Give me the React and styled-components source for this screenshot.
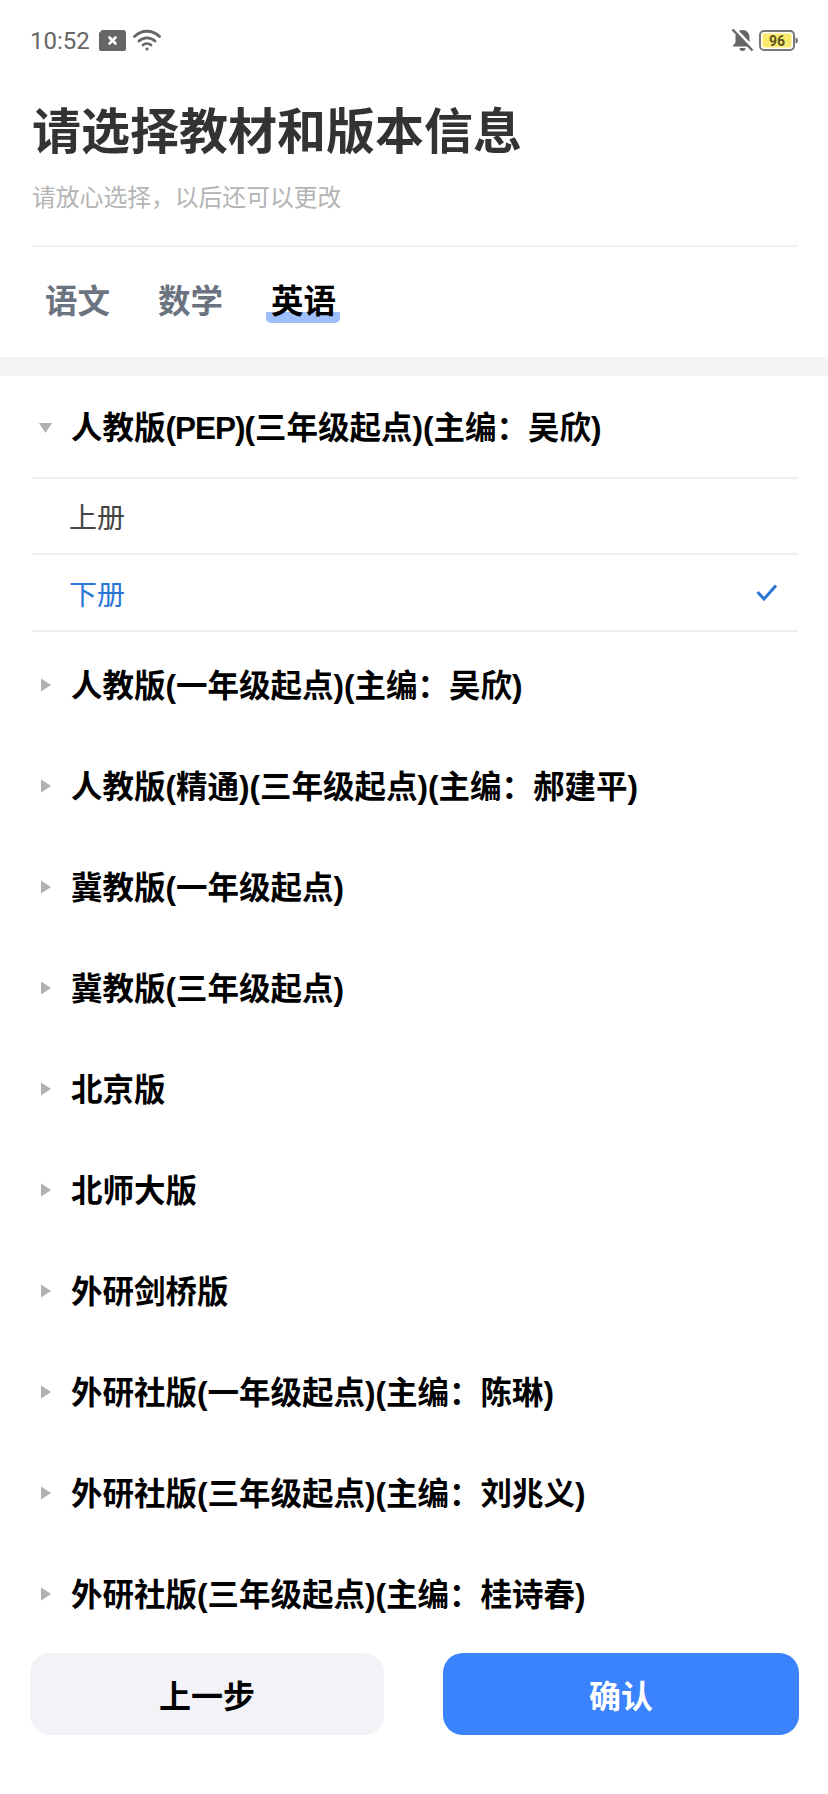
import React from 'react';
import styled, { createGlobalStyle } from 'styled-components';

const Global = createGlobalStyle`
  html, body { margin: 0; padding: 0; background: #fff; }
  * { box-sizing: border-box; }
`;
const Page = styled.div`
  width: 828px; height: 1794px; overflow: hidden; display: flex; flex-direction: column;
  background: #fff; font-family: "Liberation Sans", "Noto Sans CJK SC", sans-serif; color: #000;
`;
const StatusBar = styled.div`
  height: 80px; padding: 0 30px; display: flex; align-items: center; justify-content: space-between;
  color: #666;
`;
const StatusGroup = styled.div`
  display: flex; align-items: center; gap: ${p => p.$gap || 7}px;
`;
const Time = styled.span`
  font: 400 24px/1 Roboto, sans-serif; color: #666; margin-right: 2px; padding-top: 2px;
`;
const Head = styled.div`
  margin: 0 30px 0 32px; border-bottom: 2px solid #f0f0f0; padding-top: 22px; height: 167px;
`;
const Title = styled.h1`
  margin: 0; font-size: 49px; line-height: 60px; font-weight: 700; color: #333;
`;
const Subtitle = styled.p`
  margin: 19px 0 0; font-size: 23.8px; line-height: 34px; color: #b4b4b4;
`;
const Tabs = styled.div`
  height: 110px; padding: 31px 0 0 45px; display: flex; gap: 48px; align-items: flex-start;
`;
const Tab = styled.div`
  position: relative; font-size: 32.5px; line-height: 48px; font-weight: 700;
  color: ${p => p.$active ? '#000' : '#6b7280'};
  ${p => p.$active && `
    &::after {
      content: ''; position: absolute; left: -5px; right: -4px; top: 34px; height: 11px;
      border-radius: 0 0 5px 5px; background: #9dbffb; z-index: 0;
    }
  `}
`;
const TabLabel = styled.span`
  position: relative; z-index: 1;
`;
const Band = styled.div`
  height: 19px; background: #f3f3f3; flex: none;
`;
const List = styled.div`
  flex: 1; min-height: 0; overflow: hidden; padding: 0 30px 0 32px;
`;
const GroupHeader = styled.div`
  height: 101px; padding-bottom: 4px; display: flex; align-items: center; font-size: 31.5px; font-weight: 700; color: #000;
`;
const CaretBox = styled.span`
  width: 39px; flex: none; display: flex; justify-content: flex-start; padding-left: 7px; margin-top: 4px;
`;
const GroupName = styled.span`
  white-space: pre;
`;
const Code = styled.span`
  letter-spacing: -1px;
`;
const Volume = styled.div`
  height: ${p => p.$selected ? 79 : 76}px; padding: 0 20px 0 37px; display: flex; align-items: center; justify-content: space-between;
  border-top: 2px solid #efefef; font-size: 28px;
  color: ${p => p.$selected ? '#2a76d6' : '#444'};
  &:last-of-type { border-bottom: 2px solid #efefef; }
`;
const Volumes = styled.div`
  margin-bottom: 2px;
`;
const Footer = styled.div`
  height: 141px; flex: none; padding: 0 29px 0 30px; display: grid; grid-template-columns: 354px 356px; justify-content: space-between; align-items: start; background: #fff;
`;
const Button = styled.button`
  height: 82px; border: 0; border-radius: 20px; font-family: inherit; font-size: 32px; font-weight: 700;
  background: ${p => p.$primary ? '#3b82fd' : '#f3f3f7'};
  color: ${p => p.$primary ? '#fff' : '#000'};
`;

const Caret = ({ open }) => (
  <svg width="14" height="14" viewBox="0 0 14 14">
    <path d={open ? 'M0 3h13l-6.500 10z' : 'M2 0.500l10 6.500-10 6.500z'} fill="#b0b0b0" />
  </svg>
);
const NotifIcon = () => (
  <svg width="27" height="21" viewBox="0 0 27 21">
    <path d="M3 0h21a3 3 0 0 1 3 3v16a2 2 0 0 1-2 2H2a2 2 0 0 1-2-2V3z" fill="#666" />
    <path d="M10.500 7.500l6 6M16.500 7.500l-6 6" stroke="#fff" strokeWidth="2.600" strokeLinecap="round" />
  </svg>
);
const WifiIcon = () => (
  <svg width="28" height="22" viewBox="0 0 28 22" fill="none" stroke="#666" strokeWidth="2.800" strokeLinecap="round">
    <path d="M1.500 7.500C8.500 0.500 19.500 0.500 26.500 7.500" />
    <path d="M6 12C10.500 7.800 17.500 7.800 22 12" />
    <path d="M10 16C12.300 14.200 15.700 14.200 18 16" />
    <circle cx="14" cy="20" r="1.600" fill="#666" stroke="none" />
  </svg>
);
const BellOffIcon = () => (
  <svg width="23" height="23" viewBox="0 0 23 23">
    <path d="M11.500 1c4.500 0 7 3.200 7 7.500v5l3 4H1.500l3-4v-5C4.500 4.200 7 1 11.500 1z" fill="#666" />
    <path d="M8.500 19h6a3 3 0 0 1-6 0z" fill="#666" />
    <path d="M4 0l19 20" stroke="#fff" strokeWidth="3" />
    <path d="M1.500 0.500l20 21" stroke="#666" strokeWidth="2.400" />
  </svg>
);
const BatteryIcon = () => (
  <svg width="39" height="21" viewBox="0 0 39 21">
    <rect x="1" y="1" width="34" height="19" rx="4" fill="#fff" stroke="#777" strokeWidth="2" />
    <rect x="3.500" y="3.500" width="29" height="14" rx="2" fill="#fbe96e" />
    <path d="M36.500 7.500c1.500 0 2.500 1 2.500 3s-1 3-2.500 3z" fill="#777" />
    <text x="18" y="15.500" textAnchor="middle" fontFamily="Roboto, sans-serif" fontSize="14" fontWeight="700" fill="#5b5220">96</text>
  </svg>
);
const CheckIcon = () => (
  <svg width="22" height="17" viewBox="0 0 22 17" fill="none">
    <path d="M1.500 8L8 15 20 1.500" stroke="#2a76d6" strokeWidth="3" />
  </svg>
);

const C = '\uFF1A';
const others = [
  `人教版(一年级起点)(主编${C}吴欣)`,
  `人教版(精通)(三年级起点)(主编${C}郝建平)`,
  '冀教版(一年级起点)',
  '冀教版(三年级起点)',
  '北京版',
  '北师大版',
  '外研剑桥版',
  `外研社版(一年级起点)(主编${C}陈琳)`,
  `外研社版(三年级起点)(主编${C}刘兆义)`,
  `外研社版(三年级起点)(主编${C}桂诗春)`,
];

export default function App() {
  return (
    <Page lang="zh-CN">
      <Global />
      <StatusBar>
        <StatusGroup>
          <Time>10:52</Time>
          <NotifIcon />
          <WifiIcon />
        </StatusGroup>
        <StatusGroup $gap={5}>
          <BellOffIcon />
          <BatteryIcon />
        </StatusGroup>
      </StatusBar>
      <Head>
        <Title>请选择教材和版本信息</Title>
        <Subtitle>{'请放心选择\uFF0C以后还可以更改'}</Subtitle>
      </Head>
      <Tabs>
        <Tab><TabLabel>语文</TabLabel></Tab>
        <Tab><TabLabel>数学</TabLabel></Tab>
        <Tab $active><TabLabel>英语</TabLabel></Tab>
      </Tabs>
      <Band />
      <List>
        <GroupHeader>
          <CaretBox><Caret open /></CaretBox>
          <GroupName>人教版<Code>(PEP)</Code>{`(三年级起点)(主编${C}吴欣)`}</GroupName>
        </GroupHeader>
        <Volumes>
          <Volume>上册</Volume>
          <Volume $selected>下册<CheckIcon /></Volume>
        </Volumes>
        {others.map(t => (
          <GroupHeader key={t}><CaretBox><Caret /></CaretBox><GroupName>{t}</GroupName></GroupHeader>
        ))}
      </List>
      <Footer>
        <Button>上一步</Button>
        <Button $primary>确认</Button>
      </Footer>
    </Page>
  );
}
